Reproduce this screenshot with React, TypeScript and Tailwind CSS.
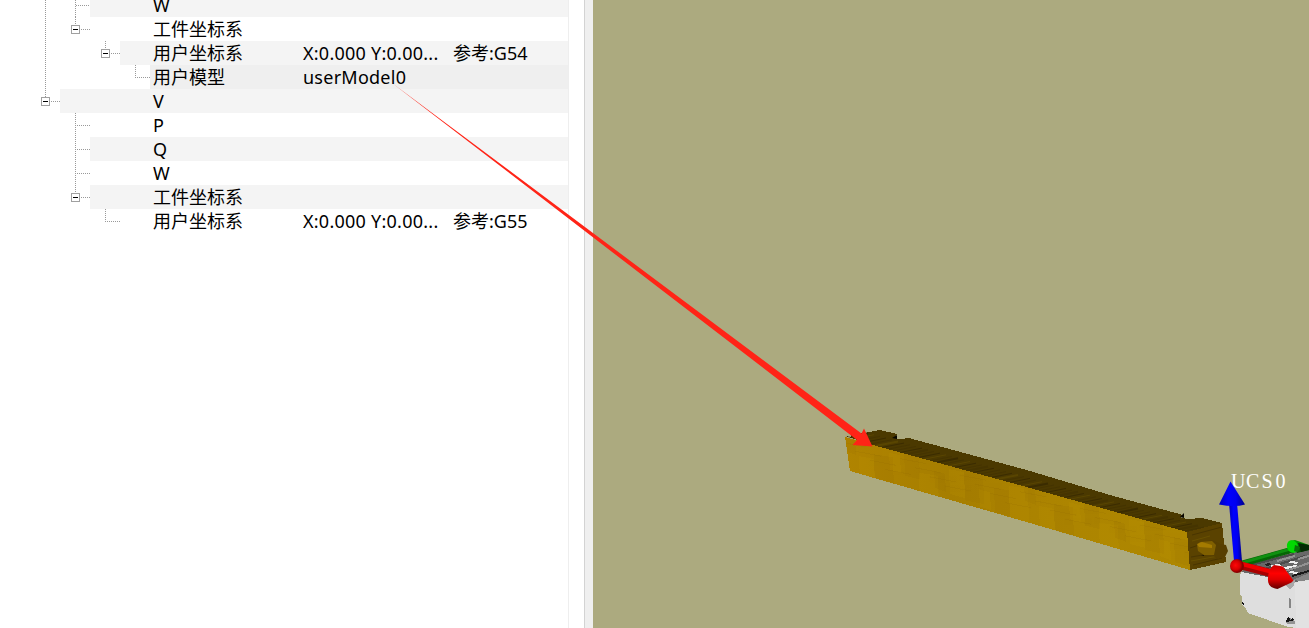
import React from "react";

type Branch = { v?: [number, number, number][]; h?: [number, number, number]; box?: [number, number] };
type Row = { indent: number; bg: string; name: string; value?: string; note?: string; branch: Branch };

/* Branch coordinates are relative to the 24px row. */
const rows: Row[] = [
  { indent: 90, bg: "bg-[#f4f4f4]", name: "W", branch: { v: [[45, 1, 24], [75, 1, 24]], h: [76, 90, 12] } },
  { indent: 90, bg: "bg-white", name: "工件坐标系", branch: { v: [[45, 1, 24], [75, 0, 8]], h: [81, 90, 12], box: [75, 12] } },
  { indent: 120, bg: "bg-[#f4f4f4]", name: "用户坐标系", value: "X:0.000 Y:0.00...", note: "参考:G54", branch: { v: [[45, 1, 24], [105, 0, 8]], h: [111, 120, 12], box: [105, 12] } },
  { indent: 150, bg: "bg-[#efefef]", name: "用户模型", value: "userModel0", branch: { v: [[45, 1, 24], [135, 0, 12]], h: [135, 150, 12] } },
  { indent: 60, bg: "bg-[#f4f4f4]", name: "V", branch: { v: [[45, 1, 8]], h: [51, 60, 12], box: [45, 12] } },
  { indent: 90, bg: "bg-white", name: "P", branch: { v: [[75, 0, 24]], h: [77, 90, 12] } },
  { indent: 90, bg: "bg-[#f4f4f4]", name: "Q", branch: { v: [[75, 0, 24]], h: [77, 90, 12] } },
  { indent: 90, bg: "bg-white", name: "W", branch: { v: [[75, 0, 24]], h: [77, 90, 12] } },
  { indent: 90, bg: "bg-[#f4f4f4]", name: "工件坐标系", branch: { v: [[75, 0, 8]], h: [81, 90, 12], box: [75, 12] } },
  { indent: 120, bg: "bg-white", name: "用户坐标系", value: "X:0.000 Y:0.00...", note: "参考:G55", branch: { v: [[105, 0, 12]], h: [105, 120, 12] } },
];

function TreeBranch({ branch, width }: { branch: Branch; width: number }) {
  return (
    <svg width={width} height={24} className="shrink-0" shapeRendering="crispEdges" fill="none" stroke="#999999">
      {branch.v?.map(([x, a, b]) => (
        <path key={x} d={`M${x + 0.5} ${a}V${b}`} strokeDasharray="1 1" />
      ))}
      {branch.h && <path d={`M${branch.h[0]} ${branch.h[2] + 0.5}H${branch.h[1]}`} strokeDasharray="1 1" />}
      {branch.box && (
        <g>
          <rect x={branch.box[0] - 3.5} y={branch.box[1] - 3.5} width={8} height={8} fill="#ffffff" stroke="#a0a0a0" />
          <path d={`M${branch.box[0] - 2} ${branch.box[1] + 0.5}h5`} stroke="#000000" />
        </g>
      )}
    </svg>
  );
}

function TreeRow({ row }: { row: Row }) {
  return (
    <div className="flex h-6 shrink-0 items-stretch">
      <TreeBranch branch={row.branch} width={row.indent} />
      <div className={`flex flex-1 justify-end whitespace-nowrap ${row.bg}`}>
        <div className="grid w-[415px] grid-cols-[150px_150px_115px] leading-6">
          <span>{row.name}</span>
          <span className="tracking-[0.25px]">{row.value}</span>
          <span>{row.note}</span>
        </div>
      </div>
    </div>
  );
}

const topFace = "845,436 851,437 851,434 864,433 880,430 897,434 894,438 900,439 909,438 1030,471 1110,495 1183,515 1181,518 1188,519 1202,518 1222,523 1187,532 1030,488 873,445";
const frontFace = "845,437 873,445 1030,488 1187,532 1190,570 1030,523 850,471";
const grain = Array.from({ length: 66 }, (_, i) => i);
const patches = Array.from({ length: 24 }, (_, i) => i);

function Beam() {
  return (
    <g>
      <defs>
        <clipPath id="top"><polygon points={topFace} /></clipPath>
        <clipPath id="front"><polygon points={frontFace} /></clipPath>
        <linearGradient id="wood" x1="0" x2="1">
          <stop offset="0" stopColor="#b08400" />
          <stop offset="0.3" stopColor="#a67e00" />
          <stop offset="0.65" stopColor="#ad8500" />
          <stop offset="1" stopColor="#ae8700" />
        </linearGradient>
      </defs>
      <polygon points={topFace} fill="#4b3900" shapeRendering="crispEdges" />
      <g clipPath="url(#top)">
        {grain.map((i) => {
          const x = 820 + i * 6;
          const y = 438 + i * 1.68;
          return (
            <path
              key={i}
              d={`M${x} ${y + 8}l28 -9 20 -4`}
              fill="none"
              stroke={i % 3 === 0 ? "#3b2c00" : i % 4 === 1 ? "#594500" : "#453400"}
              strokeWidth={i % 5 === 0 ? 2 : 1}
            />
          );
        })}
      </g>
      <polygon points={frontFace} fill="url(#wood)" shapeRendering="crispEdges" />
      <g clipPath="url(#front)" shapeRendering="crispEdges">
        {patches.map((i) => {
          const x = 844 + i * 15;
          const y = 434 + i * 4.15 + ((i * 7) % 4) * 6;
          return (
            <path
              key={i}
              d={`M${x} ${y}l${11 + (i % 3) * 4} 3 1 ${18 + (i % 3) * 8} -${11 + (i % 3) * 4} -4z`}
              fill={i % 2 ? "#c89a00" : "#936a00"}
              opacity={0.14}
            />
          );
        })}
        {patches.map((i) => (
          <path key={i} d={`M${840 + i * 15} ${442 + i * 4.15 + ((i * 5) % 4) * 5}l26 5`} stroke="#8d6700" opacity={0.15} />
        ))}
      </g>
      <polygon points="1187,532 1222,523 1226,562 1190,570" fill="#5a4200" shapeRendering="crispEdges" />
      <path d="M1192 535l30-8M1190 548l9-3M1191 557l30-5M1193 565l29-7" stroke="#493500" fill="none" />
      <path d="M1192 541l18-5M1191 561l33-6" stroke="#685000" fill="none" />
      <path d="M1202 542l10-2 9 4 5 1 2 6-3 6-7 2-6-4-9 0z" fill="#573f00" />
      <path d="M1200 542l12-1 4 4-2 10-10 0-6-4-1-6z" fill="#806000" />
      <path d="M1197 544l5-2 10 3 0 3-13-1z" fill="#a47b00" />
      <path d="M1201 555l3 0 0 1z" fill="#171100" />
      <path d="M892 438l5-3v4zM1180 517l4-4v5z" fill="#090700" />
    </g>
  );
}

function Block() {
  return (
    <g shapeRendering="crispEdges">
      <polygon points="1241,573 1246,565 1264,560 1309,549 1309,580 1294,583 1280,584" fill="#686868" />
      <path d="M1247 566l47-12M1258 571l47-15M1278 574l31-11" stroke="#4b4b4b" strokeWidth="2" fill="none" />
      <path d="M1277 561l18-5M1280 573l29-10M1298 559l11-3" stroke="#929292" strokeWidth="2" fill="none" />
      <path d="M1264 564l5-1 2 2-5 1z" fill="#252525" />
      <path d="M1271 565l8-1 5 3 12-2 2 1-11 3-9-2-6 1zM1290 571l8 1-2 2-7-1zM1287 562l5-1 6 1-2 2z" fill="#efefef" />
      <path d="M1292 576l17-5" stroke="#181818" strokeWidth="2" />
      <path d="M1293 580l16-7v9z" fill="#858585" />
      <path d="M1241 572l53 10 15-2v48h-11l-10-1-40-14-3-6-3-2v-8l-2-2v-19z" fill="#dedede" />
      <path d="M1295 583l14-3v48h-13z" fill="#e2e2e2" />
      <path d="M1285 581l10-1-1 6-4 3-5-4z" fill="#a9a9a9" />
      <path d="M1289 598l2 1v9h-2z" fill="#858585" />
      <path d="M1286 621l4-3 5 3v3l-8 0z" fill="#949494" />
      <path d="M1287 619l2-3 1 4 2-2 3 2-4 1-5 1z" fill="#161616" />
      <path d="M1242 602l2 1v2h-1z" fill="#111111" />
    </g>
  );
}

function Axes() {
  return (
    <g>
      <defs>
        <linearGradient id="blue" x1="0" x2="1">
          <stop offset="0" stopColor="#0000b8" />
          <stop offset="0.35" stopColor="#0000ff" />
          <stop offset="0.65" stopColor="#0000f0" />
          <stop offset="1" stopColor="#000088" />
        </linearGradient>
        <linearGradient id="green" x1="0" x2="0" y1="0" y2="1">
          <stop offset="0" stopColor="#00a000" />
          <stop offset="1" stopColor="#004900" />
        </linearGradient>
        <linearGradient id="red" x1="0.3" x2="0.3" y1="0" y2="1">
          <stop offset="0" stopColor="#c80000" />
          <stop offset="0.35" stopColor="#ff0000" />
          <stop offset="0.6" stopColor="#e00000" />
          <stop offset="1" stopColor="#600000" />
        </linearGradient>
        <radialGradient id="ball" cx="0.4" cy="0.45">
          <stop offset="0" stopColor="#ff0808" />
          <stop offset="0.65" stopColor="#d50000" />
          <stop offset="1" stopColor="#860000" />
        </radialGradient>
      </defs>
      <path d="M1241 564L1295 549" stroke="#056605" strokeWidth="6" />
      <path d="M1241 563L1294 548" stroke="#109010" strokeWidth="3" />
      <path d="M1290 541l5-1 14 5v5l-12 3z" fill="url(#green)" />
      <path d="M1298 543l11 2v5l-8 2z" fill="#032b03" />
      <ellipse cx="1292.5" cy="546.5" rx="5.5" ry="6.5" fill="#02d802" transform="rotate(-24 1292.5 546.5)" />
      <path d="M1295 545l5 2-2 5-4-1z" fill="#087008" />
      <path d="M1229 503h8l5 58h-8z" fill="url(#blue)" />
      <path d="M1230.500 481.500l14.500 23q-10 3-26 0z" fill="url(#blue)" />
      <path d="M1239 565L1278 575" stroke="#a80000" strokeWidth="8" />
      <path d="M1240 563.500L1278 573.500" stroke="#f00000" strokeWidth="4" />
      <path d="M1274 565l9 1.500 10.500 14-2 2-14 6.500c-7-1-10-4-9.500-11 .5-7 2-10 6-13z" fill="url(#red)" />
      <circle cx="1237" cy="566" r="7" fill="url(#ball)" />
    </g>
  );
}

function Viewport() {
  return (
    <main className="min-w-0 flex-1 bg-[#acaa7f]">
      <svg className="block" width="716" height="628" viewBox="593 0 716 628">
        <Beam />
        <Block />
        <Axes />
        <text x="1231 1246 1261.5 1275.5" y="488" fill="#ffffff" fontSize="20" fontFamily="Liberation Serif, serif">UCS0</text>
      </svg>
    </main>
  );
}

export default function App() {
  return (
    <div className="relative flex h-[628px] w-[1309px] overflow-hidden bg-white font-['Noto_Sans','Noto_Sans_CJK_SC',sans-serif] text-[18px] text-black">
      <aside className="flex w-[569px] shrink-0 flex-col overflow-hidden border-r border-[#eeeeee] bg-white">
        <div className="-mt-[7px] flex flex-col">
          {rows.map((row, i) => <TreeRow key={i} row={row} />)}
        </div>
      </aside>
      <div className="ml-[15px] w-[9px] shrink-0 border-l border-[#d3d3d3] bg-[#efefef]" />
      <Viewport />
      <svg className="pointer-events-none absolute inset-0" width="1309" height="628">
        <path d="M392 83L861.5 433.500 864 428.500 872.500 446.500 852.500 445 857 440z" fill="#ff2417" />
      </svg>
    </div>
  );
}
